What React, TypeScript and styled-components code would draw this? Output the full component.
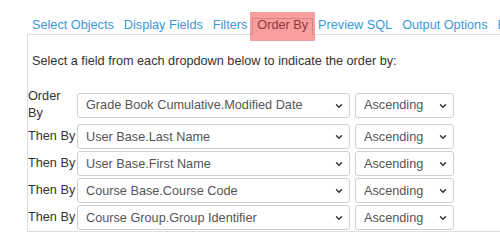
import React from "react";
import styled, { createGlobalStyle } from "styled-components";
import { ChevronDown } from "lucide-react";

const GlobalStyle = createGlobalStyle`
  html, body {
    margin: 0;
    padding: 0;
    background: #fff;
    overflow: hidden;
  }
  body {
    font-family: "Liberation Sans", Arial, sans-serif;
    font-size: 12.7px;
    color: #333;
  }
`;

const Page = styled.div`
  width: 540px;
  padding: 18px 0 0 27px;
`;

const TabBar = styled.ul`
  display: flex;
  margin: 0;
  padding: 0;
  list-style: none;
  white-space: nowrap;
  position: relative;
  z-index: 1;
`;

const Tab = styled.li<{ $active?: boolean }>`
  position: relative;
  padding: 0 4px 2px 4px;
  line-height: 13px;
  border: 1px solid ${(p) => (p.$active ? "#c9c9c9" : "transparent")};
  border-bottom: 1px solid ${(p) => (p.$active ? "#fff" : "transparent")};
  margin-bottom: -1px;
  background: ${(p) => (p.$active ? "#fff" : "transparent")};
  color: ${(p) => (p.$active ? "#333" : "#3b98d8")};
  cursor: pointer;
`;

const Highlight = styled.span`
  position: absolute;
  left: -3px;
  right: -3px;
  top: -7px;
  bottom: -7px;
  background: rgba(240, 62, 62, 0.5);
  pointer-events: none;
`;

const Panel = styled.div`
  border: 1px solid #dedede;
  padding: 0 0 1px 0;
`;

const Intro = styled.p`
  margin: 17px 0 18px 4px;
  line-height: 18px;
`;

const OrderGrid = styled.div`
  display: grid;
  grid-template-columns: 48px 273px 103px;
  column-gap: 1px;
  row-gap: 2px;
  align-items: center;
`;

const RowLabel = styled.div`
  line-height: 17px;
  color: #333;
`;

const SelectWrap = styled.div<{ $gap?: number }>`
  position: relative;
  margin-left: ${(p) => p.$gap ?? 0}px;
  height: 25px;
`;

const Select = styled.select`
  appearance: none;
  -webkit-appearance: none;
  width: 100%;
  height: 25px;
  box-sizing: border-box;
  border: 1px solid #cfcfcf;
  border-radius: 3px;
  background: #fff;
  padding: 0 20px 0 8px;
  font-family: "Liberation Sans", Arial, sans-serif;
  font-size: 12.7px;
  color: #555;
  outline: none;
`;

const Caret = styled(ChevronDown)`
  position: absolute;
  right: 6px;
  top: 8px;
  width: 10px;
  height: 10px;
  color: #333;
  pointer-events: none;
`;

const tabs = [
  "Select Objects",
  "Display Fields",
  "Filters",
  "Order By",
  "Preview SQL",
  "Output Options",
  "Run Report",
];

const rows = [
  { label: "Order By", field: "Grade Book Cumulative.Modified Date" },
  { label: "Then By", field: "User Base.Last Name" },
  { label: "Then By", field: "User Base.First Name" },
  { label: "Then By", field: "Course Base.Course Code" },
  { label: "Then By", field: "Course Group.Group Identifier" },
];

export default function App() {
  return (
    <>
      <GlobalStyle />
      <Page>
        <TabBar>
          {tabs.map((t) => (
            <Tab key={t} $active={t === "Order By"}>
              {t}
              {t === "Order By" && <Highlight />}
            </Tab>
          ))}
        </TabBar>
        <Panel>
          <Intro>Select a field from each dropdown below to indicate the order by:</Intro>
          <OrderGrid>
            {rows.map((row, i) => (
              <React.Fragment key={i}>
                <RowLabel>{row.label}</RowLabel>
                <SelectWrap>
                  <Select defaultValue={row.field}>
                    <option>{row.field}</option>
                  </Select>
                  <Caret strokeWidth={3.5} />
                </SelectWrap>
                <SelectWrap $gap={4}>
                  <Select defaultValue="Ascending">
                    <option>Ascending</option>
                    <option>Descending</option>
                  </Select>
                  <Caret strokeWidth={3.5} />
                </SelectWrap>
              </React.Fragment>
            ))}
          </OrderGrid>
        </Panel>
      </Page>
    </>
  );
}
